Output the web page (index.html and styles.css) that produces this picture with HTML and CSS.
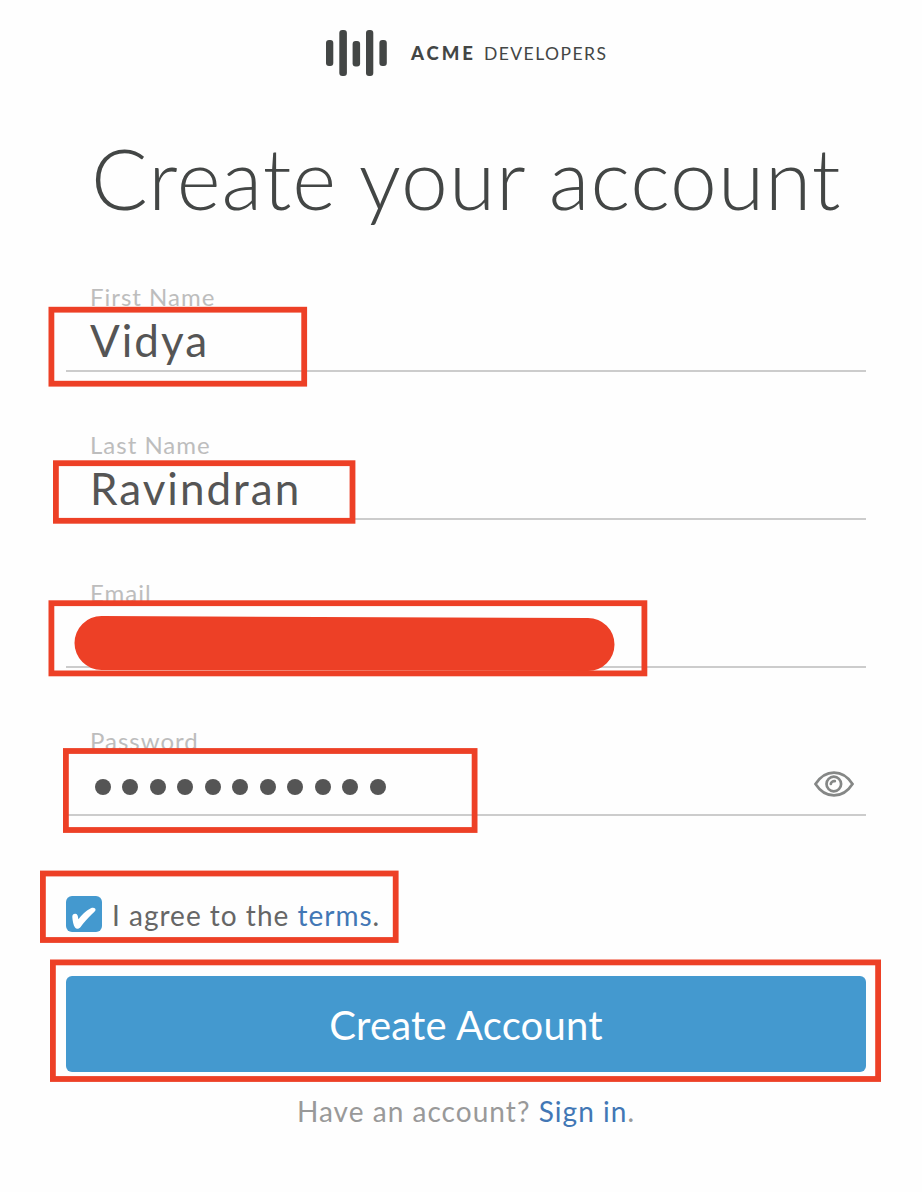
FILE: index.html
```html
<!DOCTYPE html>
<html lang="en">
<head>
<meta charset="utf-8">
<title>Create your account</title>
<link rel="stylesheet" href="styles.css">
</head>
<body>
<main class="page">
  <header class="brand">
    <svg class="brand-mark" viewBox="0 0 62 46" width="62" height="46" fill="#434645">
      <rect x="0" y="10" width="7.3" height="26" rx="3"/>
      <rect x="13.3" y="0" width="7.6" height="46" rx="3"/>
      <rect x="26.6" y="11" width="7.5" height="25.5" rx="3"/>
      <rect x="40" y="0" width="7.3" height="46" rx="3"/>
      <rect x="53.4" y="10" width="7.4" height="26" rx="3"/>
    </svg>
    <span class="brand-name"><b>ACME</b><span>DEVELOPERS</span></span>
  </header>
  <h1 class="title">Create your account</h1>
  <form class="form">
    <div class="field"><label class="label">First Name</label><div class="value">Vidya</div></div>
    <div class="field"><label class="label">Last Name</label><div class="value">Ravindran</div></div>
    <div class="field"><label class="label">Email</label><div class="value"></div></div>
    <div class="field">
      <label class="label">Password</label>
      <div class="value password">
        <div class="dots"><i></i><i></i><i></i><i></i><i></i><i></i><i></i><i></i><i></i><i></i><i></i></div>
        <svg class="eye" viewBox="0 0 40 26" width="40" height="26" fill="none" stroke="#858786" stroke-width="2.7">
          <path d="M1.5 13C6 6 12.5 1.6 20 1.6S34 6 38.5 13C34 20 27.5 24.4 20 24.4S6 20 1.5 13Z"/>
          <circle cx="19.8" cy="13" r="7.3"/>
          <path d="M16.8 13A3.4 3.4 0 0 1 20.8 10.2" stroke-linecap="round"/>
        </svg>
      </div>
    </div>
    <div class="agree">
      <span class="checkbox">
        <svg viewBox="0 0 36 36" width="36" height="36"><path d="M6.3 21C6.2 18.4 7.8 17.6 9.5 17.8C11.8 18.1 11.9 20.5 12.4 23.2C15.5 19.3 19.5 14.8 24.8 12.3C27.5 11.2 30.3 12.2 29.4 14.6C28.9 15.8 27.3 16.8 25.8 18.3C22 21.8 17.5 27 14.6 31C13.2 32.9 10.4 33.5 9 31.6C7.4 29.2 6.5 24.6 6.3 21Z" fill="#fff"/></svg>
      </span>
      <span class="agree-text">I agree to the <a>terms</a>.</span>
    </div>
    <button class="submit" type="button">Create Account</button>
  </form>
  <p class="signin">Have an account? <a>Sign in</a>.</p>
  <svg class="marks" viewBox="0 0 922 1192" width="922" height="1192" fill="none" stroke="#ed4026" stroke-width="5.8">
    <rect x="51.4" y="309.7" width="252.8" height="74"/>
    <rect x="55.9" y="463.2" width="296.6" height="57.6"/>
    <rect x="51.4" y="603.2" width="593" height="70.2"/>
    <rect x="65.9" y="751" width="408.7" height="79"/>
    <rect x="42.9" y="873.5" width="352.8" height="66.5"/>
    <rect x="52.9" y="962.4" width="825.2" height="116.6"/>
    <path d="M101.500 616L588 618A26.5 26.5 0 0 1 588 671L101.500 670A27 27 0 0 1 101.500 616Z" fill="#ed4026" stroke="none"/>
  </svg>
</main>
</body>
</html>
```
FILE: styles.css
```css
* { box-sizing: border-box; }
body { margin: 0; background: #fefefe; font-family: Lato, "Open Sans", sans-serif; }
.page { position: relative; width: 922px; height: 1192px; padding: 30px 56px 0 66px; overflow: hidden; }
.brand { display: flex; align-items: center; gap: 23px; height: 46px; padding-left: 260px; }
.brand-name { display: flex; align-items: baseline; gap: 8px; font-size: 18.5px; line-height: 44px; color: #434645; white-space: nowrap; }
.brand-name b { font-weight: 900; letter-spacing: 3px; }
.brand-name span { font-size: 17.5px; letter-spacing: 1.45px; }
.title { margin: 47px 0 0; height: 110px; padding-left: 25px; font-size: 84px; font-weight: 300; line-height: 110px; letter-spacing: 1px; color: #434645; white-space: nowrap; }
.form { display: flex; flex-direction: column; }
.field { display: flex; flex-direction: column; height: 88px; margin-bottom: 60px; padding-left: 24px; border-bottom: 2px solid #ccc; }
.form .field:first-child { margin-top: 51px; }
.label { font-size: 24px; line-height: 26px; letter-spacing: 1px; color: #bdbdbd; }
.value { height: 58px; font-size: 44px; line-height: 61px; letter-spacing: 2px; color: #555; }
.password { display: flex; align-items: center; justify-content: space-between; padding: 2px 12px 0 4.5px; }
.dots { display: flex; gap: 11.55px; padding-top: 6px; }
.dots i { width: 16px; height: 16px; border-radius: 50%; background: #555; }
.eye { display: block; }
.agree { display: flex; height: 36px; gap: 10px; margin-top: 20px; font-size: 28px; line-height: 39px; letter-spacing: 1px; color: #666; }
.checkbox { width: 36px; height: 36px; border-radius: 6px; background: #4499cf; }
.checkbox svg { display: block; }
a { color: #4277b5; }
.submit { height: 96px; margin-top: 44px; padding: 2px 0 0; border: 0; border-radius: 6px; background: #4499cf; color: #fff; font: 400 40px/48px Lato, sans-serif; letter-spacing: .2px; }
.signin { margin: 19px 0 0; text-align: center; font-size: 28px; line-height: 40px; letter-spacing: 1.04px; color: #999; }
.marks { position: absolute; left: 0; top: 0; }
```
